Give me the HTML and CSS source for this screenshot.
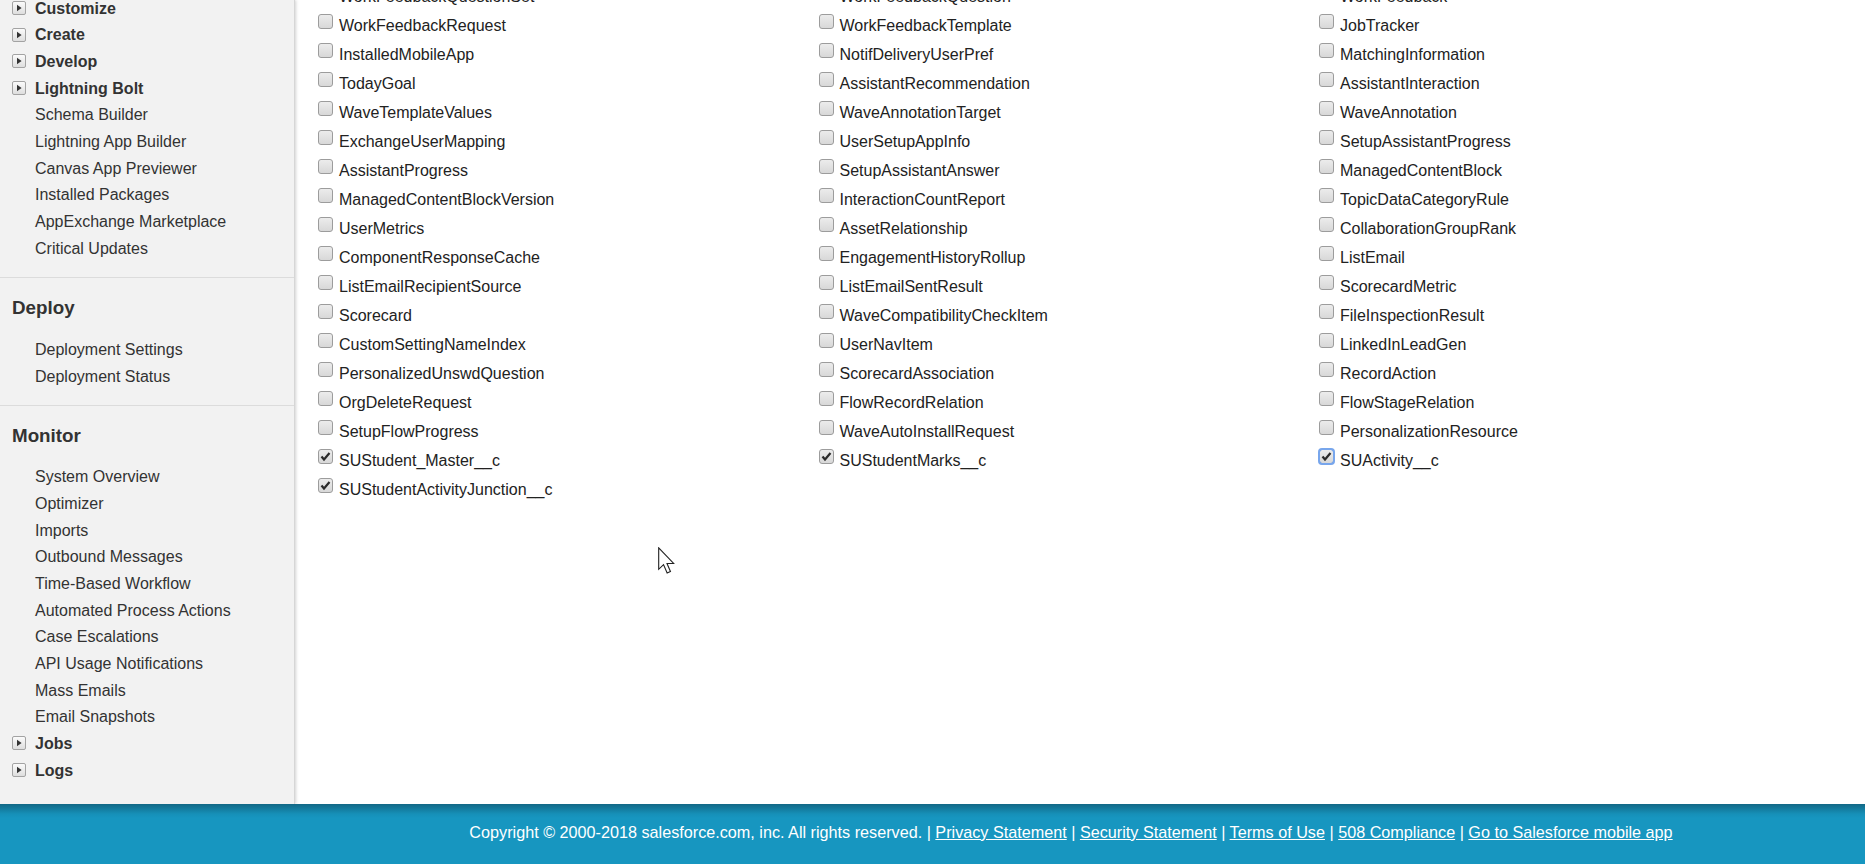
FILE: index.html
```html
<!DOCTYPE html>
<html lang="en">
<head>
<meta charset="utf-8">
<title>Setup</title>
<link rel="stylesheet" href="styles.css">
</head>
<body>
<div class="page">
  <aside class="sidebar">
    <div class="section first">
      <ul class="tree">
        <li class="node"><span class="exp"><svg viewBox="0 0 12 12" width="12" height="12"><path d="M4 2.8 L8.6 6 L4 9.2 Z" fill="#333"/></svg></span>Customize</li>
        <li class="node"><span class="exp"><svg viewBox="0 0 12 12" width="12" height="12"><path d="M4 2.8 L8.6 6 L4 9.2 Z" fill="#333"/></svg></span>Create</li>
        <li class="node"><span class="exp"><svg viewBox="0 0 12 12" width="12" height="12"><path d="M4 2.8 L8.6 6 L4 9.2 Z" fill="#333"/></svg></span>Develop</li>
        <li class="node"><span class="exp"><svg viewBox="0 0 12 12" width="12" height="12"><path d="M4 2.8 L8.6 6 L4 9.2 Z" fill="#333"/></svg></span>Lightning Bolt</li>
        <li class="leaf">Schema Builder</li>
        <li class="leaf">Lightning App Builder</li>
        <li class="leaf">Canvas App Previewer</li>
        <li class="leaf">Installed Packages</li>
        <li class="leaf">AppExchange Marketplace</li>
        <li class="leaf">Critical Updates</li>
      </ul>
    </div>
    <div class="section mid">
      <h2 class="sec-title">Deploy</h2>
      <ul class="tree">
        <li class="leaf">Deployment Settings</li>
        <li class="leaf">Deployment Status</li>
      </ul>
    </div>
    <div class="section last">
      <h2 class="sec-title">Monitor</h2>
      <ul class="tree">
        <li class="leaf">System Overview</li>
        <li class="leaf">Optimizer</li>
        <li class="leaf">Imports</li>
        <li class="leaf">Outbound Messages</li>
        <li class="leaf">Time-Based Workflow</li>
        <li class="leaf">Automated Process Actions</li>
        <li class="leaf">Case Escalations</li>
        <li class="leaf">API Usage Notifications</li>
        <li class="leaf">Mass Emails</li>
        <li class="leaf">Email Snapshots</li>
        <li class="node"><span class="exp"><svg viewBox="0 0 12 12" width="12" height="12"><path d="M4 2.8 L8.6 6 L4 9.2 Z" fill="#333"/></svg></span>Jobs</li>
        <li class="node"><span class="exp"><svg viewBox="0 0 12 12" width="12" height="12"><path d="M4 2.8 L8.6 6 L4 9.2 Z" fill="#333"/></svg></span>Logs</li>
      </ul>
    </div>
  </aside>
  <main class="content">
    <div class="grid">
      <label class="cell"><span class="cb"></span>WorkFeedbackQuestionSet</label>
      <label class="cell"><span class="cb"></span>WorkFeedbackQuestion</label>
      <label class="cell"><span class="cb"></span>WorkFeedback</label>

      <label class="cell"><span class="cb"></span>WorkFeedbackRequest</label>
      <label class="cell"><span class="cb"></span>WorkFeedbackTemplate</label>
      <label class="cell"><span class="cb"></span>JobTracker</label>

      <label class="cell"><span class="cb"></span>InstalledMobileApp</label>
      <label class="cell"><span class="cb"></span>NotifDeliveryUserPref</label>
      <label class="cell"><span class="cb"></span>MatchingInformation</label>

      <label class="cell"><span class="cb"></span>TodayGoal</label>
      <label class="cell"><span class="cb"></span>AssistantRecommendation</label>
      <label class="cell"><span class="cb"></span>AssistantInteraction</label>

      <label class="cell"><span class="cb"></span>WaveTemplateValues</label>
      <label class="cell"><span class="cb"></span>WaveAnnotationTarget</label>
      <label class="cell"><span class="cb"></span>WaveAnnotation</label>

      <label class="cell"><span class="cb"></span>ExchangeUserMapping</label>
      <label class="cell"><span class="cb"></span>UserSetupAppInfo</label>
      <label class="cell"><span class="cb"></span>SetupAssistantProgress</label>

      <label class="cell"><span class="cb"></span>AssistantProgress</label>
      <label class="cell"><span class="cb"></span>SetupAssistantAnswer</label>
      <label class="cell"><span class="cb"></span>ManagedContentBlock</label>

      <label class="cell"><span class="cb"></span>ManagedContentBlockVersion</label>
      <label class="cell"><span class="cb"></span>InteractionCountReport</label>
      <label class="cell"><span class="cb"></span>TopicDataCategoryRule</label>

      <label class="cell"><span class="cb"></span>UserMetrics</label>
      <label class="cell"><span class="cb"></span>AssetRelationship</label>
      <label class="cell"><span class="cb"></span>CollaborationGroupRank</label>

      <label class="cell"><span class="cb"></span>ComponentResponseCache</label>
      <label class="cell"><span class="cb"></span>EngagementHistoryRollup</label>
      <label class="cell"><span class="cb"></span>ListEmail</label>

      <label class="cell"><span class="cb"></span>ListEmailRecipientSource</label>
      <label class="cell"><span class="cb"></span>ListEmailSentResult</label>
      <label class="cell"><span class="cb"></span>ScorecardMetric</label>

      <label class="cell"><span class="cb"></span>Scorecard</label>
      <label class="cell"><span class="cb"></span>WaveCompatibilityCheckItem</label>
      <label class="cell"><span class="cb"></span>FileInspectionResult</label>

      <label class="cell"><span class="cb"></span>CustomSettingNameIndex</label>
      <label class="cell"><span class="cb"></span>UserNavItem</label>
      <label class="cell"><span class="cb"></span>LinkedInLeadGen</label>

      <label class="cell"><span class="cb"></span>PersonalizedUnswdQuestion</label>
      <label class="cell"><span class="cb"></span>ScorecardAssociation</label>
      <label class="cell"><span class="cb"></span>RecordAction</label>

      <label class="cell"><span class="cb"></span>OrgDeleteRequest</label>
      <label class="cell"><span class="cb"></span>FlowRecordRelation</label>
      <label class="cell"><span class="cb"></span>FlowStageRelation</label>

      <label class="cell"><span class="cb"></span>SetupFlowProgress</label>
      <label class="cell"><span class="cb"></span>WaveAutoInstallRequest</label>
      <label class="cell"><span class="cb"></span>PersonalizationResource</label>

      <label class="cell"><span class="cb checked"><svg viewBox="0 0 13 13" width="13" height="13"><path d="M2.5 6.5 L5 9.5 L10.5 3" fill="none" stroke="#2b2b2b" stroke-width="2.2"/></svg></span>SUStudent_Master__c</label>
      <label class="cell"><span class="cb checked"><svg viewBox="0 0 13 13" width="13" height="13"><path d="M2.5 6.5 L5 9.5 L10.5 3" fill="none" stroke="#2b2b2b" stroke-width="2.2"/></svg></span>SUStudentMarks__c</label>
      <label class="cell"><span class="cb checked focus"><svg viewBox="0 0 13 13" width="13" height="13"><path d="M2.5 6.5 L5 9.5 L10.5 3" fill="none" stroke="#2b2b2b" stroke-width="2.2"/></svg></span>SUActivity__c</label>

      <label class="cell"><span class="cb checked"><svg viewBox="0 0 13 13" width="13" height="13"><path d="M2.5 6.5 L5 9.5 L10.5 3" fill="none" stroke="#2b2b2b" stroke-width="2.2"/></svg></span>SUStudentActivityJunction__c</label>
    </div>
  </main>
</div>
<footer class="footer">
  <p class="footer-text">Copyright © 2000-2018 salesforce.com, inc. All rights reserved. | <a href="#">Privacy Statement</a> | <a href="#">Security Statement</a> | <a href="#">Terms of Use</a> | <a href="#">508 Compliance</a> | <a href="#">Go to Salesforce mobile app</a></p>
</footer>
<svg class="cursor" viewBox="0 0 13 20" width="18" height="28"><path d="M0.5 0.5 L0.5 16 L4 12.6 L6.6 18.6 L9 17.6 L6.5 11.8 L11.3 11.8 Z" fill="#fff" stroke="#222" stroke-width="0.8" stroke-linejoin="miter"/></svg>
</body>
</html>
```

FILE: styles.css
```css
* { box-sizing: border-box; }
html, body { margin: 0; padding: 0; }
body {
  width: 1865px;
  height: 864px;
  overflow: hidden;
  background: #fff;
  font-family: "Liberation Sans", Arial, sans-serif;
  font-size: 16px;
  color: #222;
  position: relative;
}
.page {
  display: flex;
  height: 804px;
  overflow: hidden;
}
.sidebar {
  width: 295px;
  flex: none;
  background: #f2f2f2;
  border-right: 1px solid #d6d6d6;
  box-shadow: 1px 0 3px rgba(0,0,0,0.18);
  position: relative;
  z-index: 1;
  color: #333;
}
.section {
  padding: 17px 0 16px;
  border-bottom: 1px solid #dcdcdc;
}
.section.first { margin-top: -4.3px; padding-top: 0; padding-bottom: 15px; }
.section.mid { padding-bottom: 14.5px; }
.section.last { border-bottom: none; }
.sec-title {
  margin: 0 0 15px;
  padding-left: 12px;
  font-size: 18.8px;
  font-weight: bold;
  line-height: 26.67px;
  color: #333;
}
.tree { list-style: none; margin: 0; padding: 0; }
.tree li {
  height: 26.67px;
  line-height: 26.67px;
  white-space: nowrap;
}
.leaf { padding-left: 35px; }
.node {
  padding-left: 12px;
  font-weight: bold;
  display: flex;
  align-items: center;
}
.exp {
  width: 14px;
  height: 14px;
  margin-right: 9px;
  border: 1px solid #a3a3a3;
  border-radius: 2px;
  background: linear-gradient(#fbfbfb, #dedede);
  display: flex;
  align-items: center;
  justify-content: center;
  margin-top: -2px;
}
.exp svg { display: block; }
.content {
  flex: 1;
  padding-left: 23px;
}
.grid {
  margin-top: -18.3px;
  display: grid;
  grid-template-columns: repeat(3, 500.5px);
  grid-auto-rows: 29px;
}
.cell {
  display: flex;
  align-items: flex-start;
  height: 29px;
  line-height: 29px;
  white-space: nowrap;
  color: #222;
}
.cb {
  width: 15px;
  height: 15px;
  flex: none;
  margin: 3px 6px 0 0;
  border: 1px solid #9c9c9c;
  border-radius: 3px;
  background: linear-gradient(#ececec, #d8d8d8);
  display: flex;
  align-items: center;
  justify-content: center;
}
.cb svg { display: block; }
.cb.focus {
  outline: 2px solid #78a6ec;
  outline-offset: -1px;
  border-color: #5c8fd8;
}
.footer {
  height: 60px;
  background: linear-gradient(#126886 0px, #1690b8 10px, #1796c0 14px, #1796c0 100%);
  color: #fff;
  display: flex;
  align-items: center;
  justify-content: center;
  padding-left: 277px;
  padding-bottom: 3px;
}
.footer-text {
  margin: 0;
  font-family: "Liberation Sans", Arial, sans-serif;
  font-size: 16.2px;
  white-space: nowrap;
}
.footer-text a { color: #fff; text-decoration: underline; }
.cursor {
  position: absolute;
  left: 658px;
  top: 547px;
}
```
